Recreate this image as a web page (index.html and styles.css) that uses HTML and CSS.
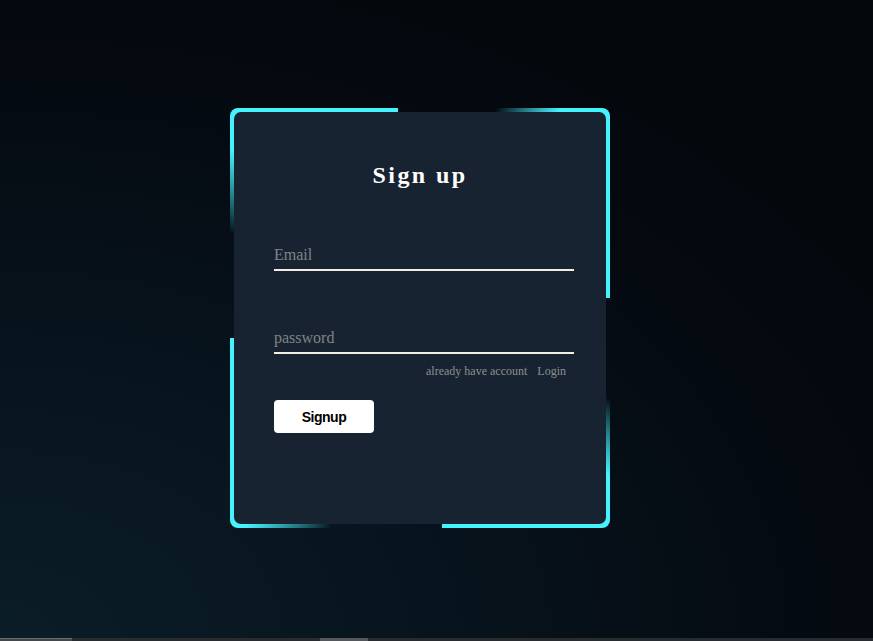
FILE: index.html
```html
<!DOCTYPE html>
<html lang="en">
<head>
<meta charset="utf-8">
<title>Sign up</title>
<link rel="stylesheet" href="styles.css">
</head>
<body>
<main class="stage">
  <div class="box">
    <form class="form">
      <h2 class="title">Sign up</h2>
      <input class="field field-email" type="text" placeholder="Email">
      <input class="field field-pass" type="password" placeholder="password">
      <div class="links">
        <a class="link">already have account</a>
        <a class="link">Login</a>
      </div>
      <button class="btn" type="button">Signup</button>
    </form>
  </div>
</main>
<div class="strip">
  <span class="strip-a"></span>
  <span class="strip-gap1"></span>
  <span class="strip-b"></span>
</div>
</body>
</html>
```
FILE: styles.css
```css
* { box-sizing: border-box; }
html, body { margin: 0; padding: 0; }
body {
  width: 873px;
  height: 641px;
  overflow: hidden;
  display: flex;
  flex-direction: column;
  background: radial-gradient(ellipse 120% 110% at 0% 100%, #0b1d27 0%, #07131c 45%, #050b12 75%, #04080d 100%);
  font-family: "Liberation Serif", "Times New Roman", serif;
}
.stage {
  flex: 1;
  display: flex;
  align-items: center;
  justify-content: center;
  padding-right: 33px;
  padding-bottom: 2px;
}
.box {
  width: 380px;
  height: 420px;
  flex: none;
  padding: 4px;
  border-radius: 8px;
  display: flex;
  background: conic-gradient(
    transparent 0deg 20deg,
    #45f3ff 34deg 84deg,
    transparent 84deg 113deg,
    #45f3ff 130deg 174deg,
    transparent 174deg 203deg,
    #45f3ff 220deg 264deg,
    transparent 264deg 294deg,
    #45f3ff 312deg 354deg,
    transparent 354deg 360deg
  );
}
.form {
  flex: 1;
  min-width: 0;
  margin: 0;
  background: #172330;
  border-radius: 7px;
  padding: 49px 40px 0 40px;
  display: flex;
  flex-direction: column;
  align-items: flex-start;
}
.title {
  align-self: stretch;
  margin: 0;
  text-align: center;
  color: #ffffff;
  font-size: 24px;
  line-height: 28px;
  font-weight: bold;
  letter-spacing: 0.1em;
}
.field {
  width: 300px;
  flex: none;
  height: 26px;
  margin: 0;
  padding: 0 0 4px 0;
  border: none;
  border-bottom: 2px solid #f3eee4;
  background: transparent;
  outline: none;
  color: #ffffff;
  font-family: "Liberation Serif", "Times New Roman", serif;
  font-size: 16px;
  line-height: 20px;
}
.field::placeholder { color: #7f8388; }
.field-email { margin-top: 56px; }
.field-pass { margin-top: 57px; }
.links {
  width: 300px;
  flex: none;
  margin-top: 10px;
  padding-right: 8px;
  display: flex;
  justify-content: flex-end;
  gap: 10px;
  font-size: 12px;
  line-height: 14px;
}
.link { color: #8c8f93; text-decoration: none; }
.btn {
  margin-top: 22px;
  width: 100px;
  height: 33px;
  border: none;
  border-radius: 4px;
  background: #ffffff;
  color: #000000;
  font-family: "Liberation Sans", Arial, sans-serif;
  font-weight: bold;
  font-size: 14px;
  letter-spacing: -0.5px;
  padding: 0;
}
.strip {
  height: 3px;
  display: flex;
  background: #292c2f;
}
.strip-a { width: 72px; background: #45484b; border-top: 1px solid #6a6d70; }
.strip-gap1 { width: 248px; }
.strip-b { width: 48px; background: #55585b; }
```
